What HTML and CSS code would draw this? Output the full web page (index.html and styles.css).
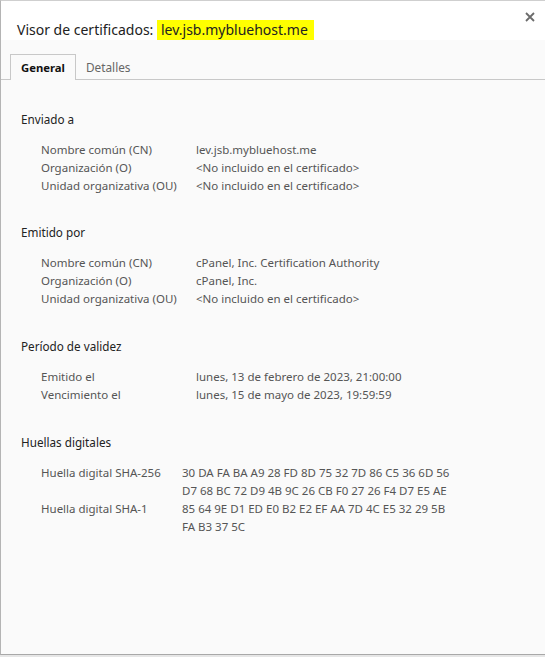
FILE: index.html
```html
<!DOCTYPE html>
<html lang="es">
<head>
<meta charset="utf-8">
<title>Visor de certificados</title>
<link rel="stylesheet" href="styles.css">
</head>
<body>
<div class="dialog">
  <header class="header">
    <h1 class="title">Visor de certificados: <span class="hl">lev.jsb.mybluehost.me</span></h1>
    <button class="close" aria-label="Cerrar">
      <svg width="10" height="10" viewBox="0 0 10 10"><path d="M1 1 L9 9 M9 1 L1 9" stroke="#6b6b6b" stroke-width="1.8" fill="none"/></svg>
    </button>
  </header>
  <div class="body">
    <nav class="tabs">
      <div class="tab active">General</div>
      <div class="tab">Detalles</div>
    </nav>
    <main class="content">
      <section class="section">
        <h2 class="heading">Enviado a</h2>
        <div class="grid">
          <div class="label">Nombre común (CN)</div><div class="value">lev.jsb.mybluehost.me</div>
          <div class="label">Organización (O)</div><div class="value">&lt;No incluido en el certificado&gt;</div>
          <div class="label">Unidad organizativa (OU)</div><div class="value">&lt;No incluido en el certificado&gt;</div>
        </div>
      </section>
      <section class="section">
        <h2 class="heading">Emitido por</h2>
        <div class="grid">
          <div class="label">Nombre común (CN)</div><div class="value">cPanel, Inc. Certification Authority</div>
          <div class="label">Organización (O)</div><div class="value">cPanel, Inc.</div>
          <div class="label">Unidad organizativa (OU)</div><div class="value">&lt;No incluido en el certificado&gt;</div>
        </div>
      </section>
      <section class="section">
        <h2 class="heading">Período de validez</h2>
        <div class="grid">
          <div class="label">Emitido el</div><div class="value">lunes, 13 de febrero de 2023, 21:00:00</div>
          <div class="label">Vencimiento el</div><div class="value">lunes, 15 de mayo de 2023, 19:59:59</div>
        </div>
      </section>
      <section class="section">
        <h2 class="heading">Huellas digitales</h2>
        <div class="grid hash">
          <div class="label">Huella digital SHA-256</div><div class="value">30 DA FA BA A9 28 FD 8D 75 32 7D 86 C5 36 6D 56<br>D7 68 BC 72 D9 4B 9C 26 CB F0 27 26 F4 D7 E5 AE</div>
          <div class="label">Huella digital SHA-1</div><div class="value">85 64 9E D1 ED E0 B2 E2 EF AA 7D 4C E5 32 29 5B<br>FA B3 37 5C</div>
        </div>
      </section>
    </main>
  </div>
</div>
</body>
</html>
```
FILE: styles.css
```css
html, body {
  margin: 0;
  padding: 0;
  background: #e6e6e6;
}
body {
  font-family: "Noto Sans", "Open Sans", sans-serif;
  width: 545px;
  height: 657px;
  overflow: hidden;
}
.dialog {
  box-sizing: border-box;
  width: 545px;
  height: 655px;
  border-top: 1px solid #cfcfcf;
  border-left: 1px solid #b4b4b4;
  border-bottom: 1px solid #a8a8a8;
  display: flex;
  flex-direction: column;
  background: #fafafa;
}
.header {
  height: 39px;
  background: #ffffff;
  display: flex;
  align-items: flex-end;
  justify-content: space-between;
  position: relative;
}
.title {
  margin: 0 0 0 16px;
  font-size: 14px;
  font-weight: normal;
  color: #222;
  line-height: 20px;
  height: 20px;
}
.hl {
  background: #ffff00;
  padding: 0 6px 0 4px;
  display: inline-block;
  height: 20px;
}
.close {
  position: absolute;
  top: 11px;
  right: 10px;
  border: 0;
  background: transparent;
  padding: 0;
  width: 10px;
  height: 10px;
  display: block;
}
.close svg { display: block; }
.body {
  flex: 1;
  display: flex;
  flex-direction: column;
}
.tabs {
  margin-top: 14px;
  padding-left: 9px;
  display: flex;
  border-bottom: 1px solid #c8c8c8;
  height: 25px;
}
.tab {
  font-size: 11.8px;
  line-height: 25px;
  padding: 0 10px;
  color: #666;
  border: 1px solid transparent;
  border-bottom: 0;
}
.tab.active {
  color: #111;
  font-weight: bold;
  font-size: 11.3px;
  border-color: #c8c8c8;
  background: #fafafa;
  height: 25px;
  margin-bottom: -1px;
}
.tab + .tab {
  border-left: 0;
}
.content {
  padding: 29.5px 20px 0 20px;
  display: flex;
  flex-direction: column;
  gap: 28.75px;
}
.section {
  display: flex;
  flex-direction: column;
  gap: 13px;
}
.heading {
  margin: 0;
  font-size: 11.7px;
  font-weight: normal;
  line-height: 18px;
  color: #222;
}
.grid {
  display: grid;
  grid-template-columns: 155px auto;
  padding-left: 20px;
  font-size: 11.5px;
  line-height: 18px;
  color: #555;
}
.grid.hash {
  grid-template-columns: 141px auto;
}
```
